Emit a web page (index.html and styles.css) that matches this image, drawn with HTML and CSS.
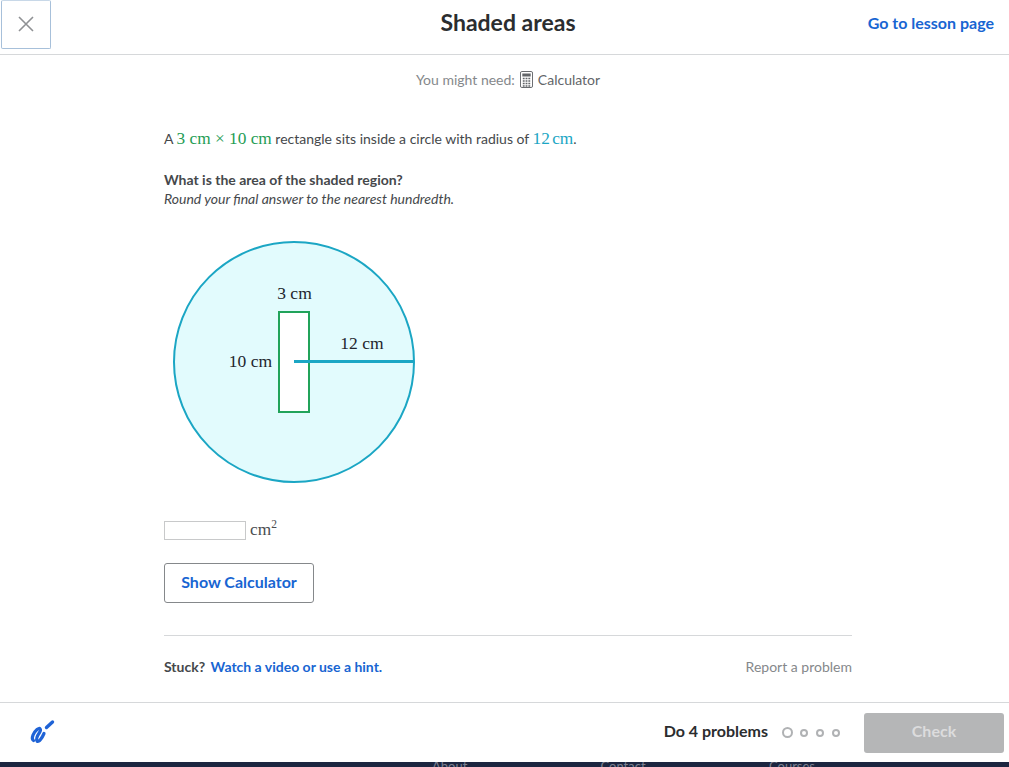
FILE: index.html
```html
<!DOCTYPE html>
<html lang="en">

<head>
    <meta charset="UTF-8">
    <meta name="viewport" content="width=device-width, initial-scale=1.0">
    <title>Shaded areas</title>
    <link rel="stylesheet" href="styles.css">
</head>

<body>
    <header class="top-bar">
        <button class="close-button" aria-label="Close">
            <svg width="16" height="16" viewBox="0 0 16 16" fill="none" stroke="#8f9194" stroke-width="1.6">
                <path d="M1 1l14 14M15 1L1 15" />
            </svg>
        </button>
        <h1>Shaded areas</h1>
        <a class="lesson-link" href="#">Go to lesson page</a>
    </header>

    <main class="exercise">
        <p class="might-need">
            You might need:
            <svg class="calc-icon" width="13" height="17" viewBox="0 0 14 17" preserveAspectRatio="none">
                <rect x="0.5" y="0.5" width="13" height="16" rx="1.5" fill="#fff" stroke="#626569" />
                <rect x="2.5" y="2.5" width="9" height="3" fill="#626569" />
                <path d="M3 7.5h8M3 10h8M3 12.5h8M3 15h8" stroke="#626569" stroke-width="1.4" stroke-dasharray="2 1" />
            </svg>
            <span class="calc-label">Calculator</span>
        </p>

        <p class="statement">A <span class="math green">3 cm × 10 cm</span> rectangle sits inside a circle with radius of <span class="math teal">12 cm</span>.</p>

        <p class="question"><strong>What is the area of the shaded region?</strong><br><em>Round your final answer to the nearest hundredth.</em></p>

        <svg class="diagram" width="242" height="242" viewBox="0 0 242 242">
            <circle cx="121" cy="121" r="120" fill="#e2fbfd" stroke="#1ba6c4" stroke-width="2" />
            <rect x="106" y="71" width="30" height="100" fill="#fff" stroke="#21a35a" stroke-width="2" />
            <path d="M121 120.500H241" stroke="#1ba6c4" stroke-width="3" />
            <text x="121.500" y="58" text-anchor="middle">3 cm</text>
            <text x="189" y="108" text-anchor="middle">12 cm</text>
            <text x="77.500" y="126" text-anchor="middle">10 cm</text>
        </svg>

        <div class="answer-row">
            <input class="answer-input" type="text" aria-label="Answer">
            <span class="math unit">cm<sup>2</sup></span>
        </div>

        <button class="calc-button">Show Calculator</button>

        <div class="stuck-row">
            <span>Stuck? <a class="hint-link" href="#">Watch a video or use a hint.</a></span>
            <a class="report" href="#">Report a problem</a>
        </div>
    </main>

    <footer class="bottom-bar">
        <svg class="scratch-icon" width="26" height="26" viewBox="0 0 26 26" fill="none" stroke="#1f63d6" stroke-linecap="round" stroke-linejoin="round">
            <path d="M23.500 3L17.500 8.500" stroke-width="3.400" />
            <path d="M4.500 21.500C1.500 19.500 5 13 8 10.500C11 8 12.500 10.500 10.500 13.500C8.500 16.500 6.500 19.500 8 22C10 24 13.500 18 15 14.500" stroke-width="3.200" />
        </svg>
        <div class="progress">
            <span class="do-count">Do 4 problems</span>
            <span class="dots">
                <span class="dot current"></span>
                <span class="dot"></span>
                <span class="dot"></span>
                <span class="dot"></span>
            </span>
            <button class="check-button" disabled>Check</button>
        </div>
    </footer>

    <div class="site-footer">
        <span>About</span>
        <span>Contact</span>
        <span>Courses</span>
    </div>
</body>

</html>
```

FILE: styles.css
```css
* {
    box-sizing: border-box;
}

body {
    margin: 0;
    height: 767px;
    overflow: hidden;
    display: flex;
    flex-direction: column;
    font-family: Lato, "Open Sans", sans-serif;
    font-size: 14px;
    color: #45484b;
    background: #fff;
}

a {
    color: #1865d2;
    text-decoration: none;
}

button {
    font-family: inherit;
}

/* top bar */
.top-bar {
    height: 55px;
    flex: none;
    display: flex;
    align-items: center;
    justify-content: space-between;
    position: relative;
    border-bottom: 1px solid #d6d8da;
    padding-right: 15px;
}

.close-button {
    width: 50px;
    height: 49px;
    margin: -6px 0 0 1px;
    padding: 0;
    display: flex;
    align-items: center;
    justify-content: center;
    background: #fff;
    border: 1px solid #a7c0da;
    border-top-color: #c8d8e8;
    border-radius: 2px;
}

.top-bar h1 {
    position: absolute;
    left: 7px;
    right: 0;
    top: 8px;
    margin: 0;
    text-align: center;
    font-size: 23px;
    line-height: 28px;
    font-weight: 700;
    color: #2b2d2f;
    pointer-events: none;
}

.lesson-link {
    font-size: 16px;
    font-weight: 700;
    margin-top: -9px;
}

/* exercise */
.exercise {
    flex: 1;
    width: 688px;
    margin-left: 164px;
    display: flex;
    flex-direction: column;
    align-items: flex-start;
    min-height: 0;
}

.might-need {
    align-self: center;
    margin: 14px 0 0;
    height: 20px;
    display: flex;
    align-items: center;
    gap: 5px;
    font-size: 14px;
    color: #85888b;
}

.calc-label {
    color: #626569;
}

.statement {
    margin: 40px 0 0;
    height: 20px;
    line-height: 20px;
    font-size: 14px;
}

.math {
    font-family: "Liberation Serif", serif;
    font-size: 17.300px;
}

.green {
    color: #1f9d55;
}

.teal {
    color: #1ba6c4;
    word-spacing: -2px;
}

.question {
    margin: 21px 0 0;
    font-size: 14px;
    line-height: 19px;
}

.diagram {
    margin: 33px 0 0 9px;
    flex: none;
}

.diagram text {
    font-family: "Liberation Serif", serif;
    font-size: 17.500px;
    fill: #21242c;
}

.answer-row {
    margin-top: 36px;
    height: 22px;
    display: flex;
    align-items: center;
    gap: 4px;
}

.answer-input {
    width: 82px;
    height: 19px;
    margin-top: 1px;
    border: 1px solid #c8c9ca;
    padding: 0;
    background: #fff;
}

.unit {
    color: #4a4d50;
}

.unit sup {
    font-size: 11.500px;
    line-height: 0;
}

.calc-button {
    margin-top: 22px;
    width: 150px;
    height: 40px;
    background: #fff;
    border: 1px solid #85888b;
    border-radius: 3px;
    color: #1865d2;
    font-size: 16px;
    font-weight: 700;
    padding: 0 0 4px;
}

.stuck-row {
    align-self: stretch;
    margin-top: 32px;
    padding-top: 21px;
    border-top: 1px solid #d6d8da;
    display: flex;
    justify-content: space-between;
    line-height: 20px;
    font-weight: 700;
}

.hint-link {
    margin-left: 2px;
}

.stuck-row .report {
    font-weight: 400;
    color: #85888b;
}

/* bottom bar */
.bottom-bar {
    height: 60px;
    flex: none;
    display: flex;
    align-items: center;
    justify-content: space-between;
    border-top: 1px solid #d6d8da;
    padding: 0 5px 0 29px;
    background: #fff;
}

.scratch-icon {
    margin-top: -2px;
}

.progress {
    display: flex;
    align-items: center;
}

.do-count {
    font-size: 16px;
    font-weight: 700;
    color: #2b2d2f;
    margin-top: -5px;
}

.dots {
    margin: 0 24px 0 14px;
    display: flex;
    align-items: center;
    gap: 8px;
}

.dot {
    width: 8px;
    height: 8px;
    border: 2px solid #b0b2b4;
    border-radius: 50%;
}

.dot.current {
    width: 11px;
    height: 11px;
    margin-right: -1px;
}

.check-button {
    width: 140px;
    height: 40px;
    border: none;
    border-radius: 3px;
    background: #b5b6b7;
    color: #dcdcdd;
    font-size: 16px;
    font-weight: 700;
    padding: 0 0 5px;
}

/* page footer peeking out below */
.site-footer {
    height: 5px;
    flex: none;
    overflow: hidden;
    display: flex;
    padding-left: 432px;
    background: #1c2640;
    color: #7b8090;
    font-size: 13px;
    line-height: 8px;
}

.site-footer span {
    width: 168.500px;
}
```
